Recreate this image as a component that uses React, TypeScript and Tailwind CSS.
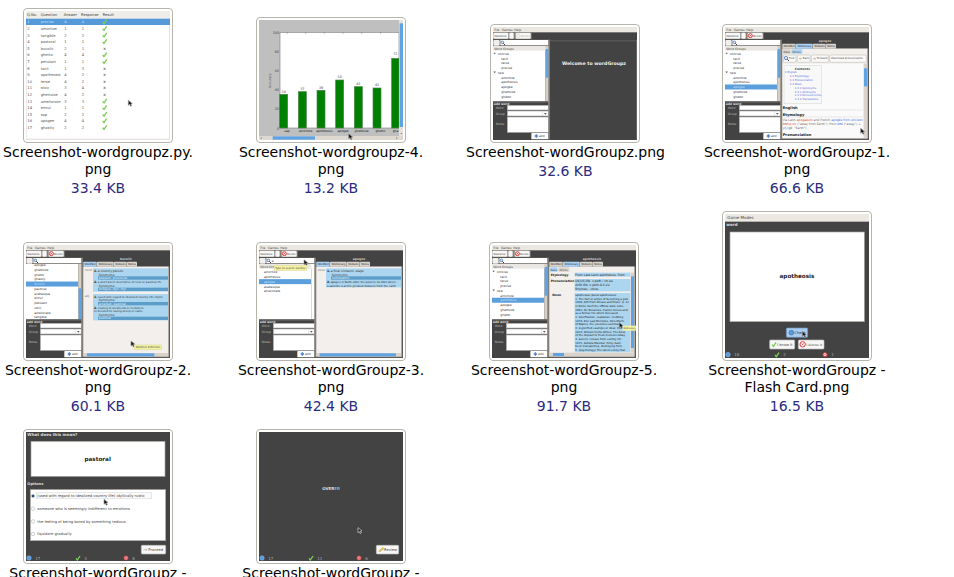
import type { ReactNode } from "react";

const DARK = "#434343";
const BEIGE = "#ebe7e1";
const SELECT = "#5a9fdc";

type LabelProps = { x: number; y: number; size?: number; fill?: string; bold?: boolean; middle?: boolean; children: ReactNode };

function Label({ x, y, size = 9, fill = "#444", bold, middle, children }: LabelProps) {
  return (
    <text x={x} y={y} fontSize={size} fill={fill} fontWeight={bold ? 700 : 400} textAnchor={middle ? "middle" : "start"}>
      {children}
    </text>
  );
}

function Box({ x, y, w, h, fill = "#fff", stroke, r = 0 }: { x: number; y: number; w: number; h: number; fill?: string; stroke?: string; r?: number }) {
  return <rect x={x} y={y} width={w} height={h} fill={fill} stroke={stroke} strokeWidth={stroke ? 2 : 0} rx={r} />;
}

/* Thumbnails are drawn at three units to the pixel. */
function Canvas({ height, title, children }: { height: number; title: string; children: ReactNode }) {
  return (
    <svg viewBox={`0 0 432 ${height}`} className="block w-36" role="img" aria-label={title} fontFamily='"DejaVu Sans", sans-serif'>
      {children}
    </svg>
  );
}

function Tick({ x, y }: { x: number; y: number }) {
  return <path d={`M${x} ${y + 7}l4 5 8-12`} fill="none" stroke="#7ccf54" strokeWidth="4" />;
}

function Pointer({ x, y, light }: { x: number; y: number; light?: boolean }) {
  return <path d={`M${x} ${y}v15l4-3 3 6 3-2-3-5 5-1z`} fill={light ? "#222" : "#111"} stroke={light ? "#ddd" : "#999"} strokeWidth="2" />;
}

function Forbid({ x, y, r = 7 }: { x: number; y: number; r?: number }) {
  return (
    <g>
      <circle cx={x} cy={y} r={r - 1} fill="#fff" stroke="#d8393b" strokeWidth="3" />
      <path d={`M${x - 3} ${y - 3}l6 6m0-6l-6 6`} stroke="#d8393b" strokeWidth="2" />
    </g>
  );
}

function Status({ y, total, right, wrong }: { y: number; total: string; right: string; wrong: string }) {
  return (
    <g>
      <circle cx={9} cy={y} r={7} fill="#5b9ce0" stroke="#a9cdf3" strokeWidth="1" />
      <Label x={28} y={y + 5} size={12} fill="#aaa">{total}</Label>
      <Tick x={150} y={y - 6} />
      <Label x={175} y={y + 5} size={12} fill="#aaa">{right}</Label>
      <Forbid x={300} y={y} />
      <Label x={319} y={y + 5} size={12} fill="#aaa">{wrong}</Label>
    </g>
  );
}

const answers: [string, string, string, boolean][] = [
  ["precise", "4", "4", true],
  ["amortize", "1", "1", true],
  ["tangible", "2", "2", true],
  ["pastoral", "1", "1", true],
  ["bucolic", "2", "1", false],
  ["ghetto", "4", "4", true],
  ["petulant", "1", "1", true],
  ["tacit", "1", "3", false],
  ["apotheosis", "4", "2", false],
  ["terse", "4", "2", false],
  ["stoic", "3", "4", false],
  ["ghettoize", "4", "2", false],
  ["ameliorate", "3", "3", true],
  ["ennui", "1", "1", true],
  ["sap", "2", "2", true],
  ["apogee", "4", "4", true],
  ["ghastly", "2", "2", true],
];

function ResultsThumb() {
  return (
    <Canvas height={387} title="Results table">
      <Box x={0} y={0} w={432} h={387} fill="#e6e3de" />
      <Box x={2} y={22} w={427} h={361} />
      <Box x={0} y={0} w={432} h={22} fill="#efedea" />
      <Label x={3} y={16} size={11}>Q.No.</Label>
      <Label x={44} y={16} size={11}>Question</Label>
      <Label x={113} y={16} size={11}>Answer</Label>
      <Label x={165} y={16} size={11}>Response</Label>
      <Label x={230} y={16} size={11}>Result</Label>
      <Box x={0} y={23} w={432} h={19} fill="#5599d8" />
      {answers.map(([word, answer, response, ok], i) => {
        const y = 37 + i * 19.8;
        const fill = i === 0 ? "#bddcf7" : "#555";
        return (
          <g key={word}>
            <Label x={4} y={y} size={11} fill={fill}>{i + 1}</Label>
            <Label x={44} y={y} size={11} fill={fill}>{word}</Label>
            <Label x={115} y={y} size={11} fill={fill}>{answer}</Label>
            <Label x={167} y={y} size={11} fill={fill}>{response}</Label>
            {ok ? <Tick x={230} y={y - 11} /> : <Label x={232} y={y} size={12} fill="#777" bold>x</Label>}
          </g>
        );
      })}
      <Pointer x={307} y={268} />
    </Canvas>
  );
}

const bars: [string, number, number, number][] = [
  ["sap", 34, 62, 223],
  ["amortize", 37, 118, 215],
  ["apotheosis", 39, 174, 211],
  ["apogee", 50, 230, 180],
  ["ghettoize", 43, 286, 200],
  ["ghetto", 41, 342, 204],
];

function ChartThumb() {
  return (
    <Canvas height={360} title="Accuracy chart">
      <Box x={0} y={0} w={432} h={360} fill="#bfbfbf" />
      <Box x={63} y={37} w={357} h={287} stroke="#888" />
      {[100, 80, 60, 40, 20, 0].map((n, i) => (
        <text key={n} x={60} y={41 + i * 57.5} fontSize={10} fill="#444" textAnchor="end">{n}</text>
      ))}
      <text transform="rotate(-90 36 182)" x={36} y={182} fontSize={10} fill="#555" textAnchor="middle">Accuracy</text>
      {bars.map(([word, value, x, y]) => (
        <g key={word}>
          <Box x={x} y={y} w={24} h={324 - y} fill="#008000" stroke="#4d844d" />
          <Label x={x + 12} y={y - 5} size={10} middle>{value}</Label>
          <Label x={x + 22} y={335} fill="#111" middle>{word}</Label>
        </g>
      ))}
      <Box x={398} y={115} w={22} h={209} fill="#008000" stroke="#4d844d" />
      <Label x={409} y={105} size={10} middle>72</Label>
      <Label x={401} y={335} fill="#111">gha</Label>
      <path d="M85 37v4M140 37v4M196 37v4M252 37v4M308 37v4M365 37v4" stroke="#777" strokeWidth="2" />
      <Box x={420} y={0} w={12} h={348} fill="#e6e1da" />
      <Box x={422} y={10} w={10} h={311} fill="#5fa3e3" />
      <Box x={0} y={348} w={432} h={12} fill="#ded8d0" />
      <Box x={41} y={349} w={127} h={10} fill="#5fa3e3" />
      <path d="M8 351l-4 3 4 3zM412 351l4 3-4 3zM424 339l3 4 3-4z" fill="#777" />
      <Pointer x={269} y={341} />
    </Canvas>
  );
}

const groupTree: [string, number][] = [
  ["concise", 14], ["tacit", 25], ["terse", 25], ["precise", 25], ["new", 14],
  ["amortize", 25], ["apotheosis", 25], ["apogee", 25], ["ghettoize", 25], ["ghetto", 25],
];

type WindowProps = {
  title: string;
  rows: [string, number][];
  firstRow: number;
  selected?: number;
  header?: boolean;
  canDelete?: boolean;
  query?: string;
  track?: [number, number];
  children: ReactNode;
};

function AppWindow({ title, rows, firstRow, selected, header = true, canDelete = true, query, track, children }: WindowProps) {
  return (
    <Canvas height={339} title={title}>
      <Box x={0} y={0} w={432} h={339} fill={DARK} />
      <Box x={0} y={36} w={168} h={303} fill="#55534f" />
      <Box x={0} y={57} w={157} h={167} />
      {rows.map(([word, x], i) => {
        const y = firstRow + i * 14.2;
        return (
          <g key={word}>
            {i === selected && <Box x={0} y={y - 11} w={157} h={15} fill={SELECT} />}
            {x === 14 && <path d={`M1 ${y - 7}h8l-4 5z`} fill="#666" />}
            <Label x={x} y={y} fill={i === selected ? "#c5e0f8" : "#333"}>{word}</Label>
          </g>
        );
      })}
      {header && <Box x={0} y={57} w={166} h={14} fill="#ebe8e3" />}
      {header && <Label x={4} y={68}>Word Groups</Label>}
      <Box x={157} y={57} w={10} h={167} fill={track ? "#d4cec5" : "#fff"} />
      {track && <Box x={158} y={track[0]} w={9} h={track[1]} fill="#5fa3e3" />}
      <Box x={0} y={0} w={432} h={16} fill={BEIGE} />
      <Label x={4} y={12}>File</Label>
      <Label x={27} y={12}>Games</Label>
      <Label x={64} y={12}>Help</Label>
      <Box x={0} y={16} w={116} h={20} fill="#85817b" />
      <Box x={1} y={17} w={45} h={18} fill="#f8f7f5" r={3} />
      <Label x={4} y={29} size={8}>Statistics</Label>
      <Box x={49} y={17} w={13} h={18} fill="#f8f7f5" r={3} />
      <Label x={53} y={29} size={8} fill="#bbb">-</Label>
      <Box x={68} y={17} w={45} h={18} fill="#f8f7f5" r={3} />
      {canDelete ? <Forbid x={76} y={26} /> : <circle cx={76} cy={26} r={5} fill="none" stroke="#ccc" strokeWidth="2" />}
      <Label x={84} y={29} size={8} fill={canDelete ? "#444" : "#aaa"}>Delete</Label>
      <Box x={1} y={39} w={19} h={17} fill="#f2f0ed" r={3} />
      <Box x={22} y={39} w={144} h={16} />
      <circle cx={28} cy={46} r={4} fill="#dfeaf8" stroke="#3565ac" strokeWidth="2" />
      <path d="M31 49l5 5" stroke="#334" strokeWidth="3" />
      {query && <Label x={38} y={50}>{query}</Label>}
      <Box x={0} y={223} w={168} h={116} fill={DARK} />
      <Box x={0} y={224} w={168} h={2} fill="#85817b" />
      <Label x={2} y={233} fill="#ddd" bold>add word</Label>
      <Label x={8} y={245} fill="#bbb">Word</Label>
      <Label x={8} y={263} fill="#bbb">Group</Label>
      <Label x={8} y={295} fill="#bbb">Notes</Label>
      <Box x={43} y={235} w={123} h={14} stroke="#aaa" />
      <Box x={43} y={252} w={123} h={15} stroke="#aaa" />
      <path d="M149 252v15" stroke="#bbb" />
      <path d="M153 258h8l-4 5z" fill="#555" />
      <Box x={43} y={270} w={123} h={46} stroke="#aaa" />
      <Box x={115} y={318} w={51} h={19} fill="#fff" r={2} />
      <path d="M125 327h10M130 322v10" stroke="#4d83cb" strokeWidth="4" />
      <Label x={138} y={331}>add</Label>
      <Box x={166} y={38} w={4} h={299} fill="#969289" />
      {children}
    </Canvas>
  );
}

const tabs: [string, number, number][] = [["WordNet", 172, 41], ["Wiktionary", 213, 51], ["Website", 264, 39], ["Notes", 303, 31]];

function Notebook({ title, active }: { title: string; active: number }) {
  return (
    <g>
      <Label x={300} y={46} fill="#ccc" bold middle>{title}</Label>
      <Box x={170} y={64} w={260} h={273} fill="#8f8b84" />
      <Box x={172} y={65} w={255} h={269} fill="#f2efec" />
      {tabs.map(([name, x, w], i) => (
        <g key={name}>
          <Box x={x} y={50} w={w - 1} h={15} fill={i === active ? "#acd3f5" : "#d9d4cc"} r={2} />
          <Label x={x + w / 2} y={61} size={8} fill="#222" middle>{name}</Label>
        </g>
      ))}
    </g>
  );
}

function SubTabs({ active }: { active: number }) {
  return (
    <g>
      <Box x={173} y={67} w={24} h={13} fill={active === 0 ? "#acd3f5" : "#d9d4cc"} r={2} />
      <Label x={185} y={77} size={8} middle>Data</Label>
      <Box x={199} y={67} w={33} h={13} fill={active === 1 ? "#acd3f5" : "#d9d4cc"} r={2} />
      <Label x={215} y={77} size={8} middle>Online</Label>
    </g>
  );
}

function WelcomeThumb() {
  return (
    <AppWindow title="Welcome window" rows={groupTree} firstRow={84} canDelete={false} track={[66, 86]}>
      <Box x={170} y={40} w={262} h={3} fill="#5f5f5c" />
      <Box x={429} y={40} w={2} h={297} fill="#777" />
      <Label x={303} y={114} size={14} fill="#eee" bold middle>Welcome to wordGroupz</Label>
    </AppWindow>
  );
}

const contents: [string, number][] = [
  ["1 English", 179], ["1.1 Etymology", 194], ["1.2 Pronunciation", 194], ["1.3 Noun", 194],
  ["1.3.1 Synonyms", 209], ["1.3.2 Antonyms", 209], ["1.3.3 Derived terms", 209], ["1.3.4 Translations", 209],
];

const webButtons: [string, number, number][] = [["Find", 175, 38], ["Back", 217, 38], ["Forward", 259, 52], ["download pronunciation", 314, 110]];

function WiktionaryThumb() {
  return (
    <AppWindow title="Wiktionary page" rows={groupTree} firstRow={84} selected={7} track={[66, 86]}>
      <Notebook title="apogee" active={1} />
      <SubTabs active={1} />
      {webButtons.map(([name, x, w], i) => (
        <g key={name}>
          <Box x={x} y={84} w={w} h={22} fill="#faf9f8" stroke="#c6c2bb" r={3} />
          <Label x={i === 3 ? x + 4 : x + 16} y={97} size={8}>{name}</Label>
        </g>
      ))}
      <circle cx={183} cy={93} r={5} fill="#dfeaf8" stroke="#3565ac" strokeWidth="2" />
      <path d="M187 97l5 5" stroke="#334" strokeWidth="3" />
      <path d="M231 95h-8m3-3-3 3 3 3M264 95h8m-3-3 3 3-3 3" fill="none" stroke="#aaa" strokeWidth="2" />
      <Box x={173} y={110} w={243} h={222} fill="#fafafa" />
      <Box x={177} y={116} w={113} h={113} fill="#f8f8f8" stroke="#ddd" />
      <Label x={232} y={128} bold middle>Contents</Label>
      {contents.map(([name, x], i) => (
        <Label key={name} x={x} y={139 + i * 11.5} size={8} fill="#4b67d6">{name}</Label>
      ))}
      <Label x={173} y={246} size={11} fill="#222" bold>English</Label>
      <Label x={173} y={266} size={11} fill="#222" bold>Etymology</Label>
      <path d="M173 249h240M173 270h240" stroke="#ccc" />
      <text x={173} y={282} fontSize={9} fill="#666">
        Via Latin <tspan fill="#d44333">apogaeum</tspan> and French <tspan fill="#4969dc">apogée from Ancient</tspan>
      </text>
      <text x={173} y={294} fontSize={9} fill="#666">
        <tspan fill="#d44333">ἀπόγειον</tspan> (“away from Earth”), from <tspan fill="#4969dc">ἀπό</tspan> (“away”) +
      </text>
      <text x={173} y={306} fontSize={9} fill="#666"><tspan fill="#4969dc">γῆ</tspan> (gê, “Earth”).</text>
      <Label x={173} y={326} size={11} fill="#222" bold>Pronunciation</Label>
      <Box x={416} y={110} w={11} h={222} fill="#d8d2ca" />
      <Box x={417} y={124} w={10} h={54} fill="#5fa3e3" />
      <Pointer x={407} y={304} />
    </AppWindow>
  );
}

const bucolicRows: [string, number][] = [
  ["ghettoize", 25], ["ghetto", 25], ["ghastly", 25], ["bucolic", 25], ["pastoral", 25],
  ["arabesque", 25], ["ennui", 25], ["petulant", 25], ["stoic", 25], ["ameliorate", 25], ["tangible", 25],
];

function Synonyms({ y, words }: { y: number; words: string }) {
  return (
    <g>
      <Label x={218} y={y} fill="#333">Synonyms:</Label>
      <Box x={216} y={y + 2} w={210} h={10} fill="#5c9dc9" />
      <Label x={218} y={y + 10} fill="#e8f4fb">{words}</Label>
    </g>
  );
}

function BucolicThumb() {
  return (
    <AppWindow title="WordNet definition of bucolic" rows={bucolicRows} firstRow={78} selected={3} header={false} track={[130, 92]}>
      <Label x={25} y={64} fill="#333">apogee</Label>
      <Notebook title="bucolic" active={0} />
      <Label x={176} y={79} fill="#777">noun</Label>
      <Label x={176} y={155} fill="#777">adj</Label>
      <Box x={201} y={70} w={225} h={70} fill="#acd5ef" />
      <Box x={201} y={147} w={225} h={79} fill="#acd5ef" />
      <Label x={204} y={81} fill="#222" bold>1.</Label>
      <Label x={215} y={81} fill="#333">a country person</Label>
      <Synonyms y={92} words="peasant, provincial" />
      <Label x={204} y={115} fill="#222" bold>2.</Label>
      <Label x={215} y={115} size={8} fill="#333">a short poem descriptive of rural or pastoral life</Label>
      <Synonyms y={126} words="eclogue, idyll, idyl" />
      <Label x={204} y={158} fill="#222" bold>1.</Label>
      <Label x={215} y={158} size={8} fill="#333">(used with regard to idealized country life) idyllic</Label>
      <Synonyms y={169} words="arcadian, pastoral" />
      <Label x={204} y={191} fill="#222" bold>2.</Label>
      <Label x={215} y={191} size={8} fill="#333">relating to shepherds or herdsmen</Label>
      <Label x={204} y={202} size={8} fill="#333">or devoted to raising sheep or cattle</Label>
      <Synonyms y={213} words="pastoral" />
      <Box x={174} y={324} w={252} h={10} fill="#d8d2ca" />
      <Box x={183} y={325} w={202} h={9} fill="#5fa3e3" />
      <Pointer x={315} y={288} />
      <Box x={325} y={300} w={82} h={14} fill="#f4f2a1" stroke="#e2dfa0" />
      <Label x={366} y={310} size={8} middle>Wordnet definition</Label>
    </AppWindow>
  );
}

const searchRows: [string, number][] = [["amortize", 15], ["apotheosis", 15], ["apogee", 15], ["arabesque", 15], ["ameliorate", 15]];

function SearchThumb() {
  return (
    <AppWindow title="Word search" rows={searchRows} firstRow={85} selected={2} query="a">
      <Notebook title="apogee" active={0} />
      <Label x={176} y={79} fill="#777">noun</Label>
      <Box x={201} y={70} w={225} h={57} fill="#acd5ef" />
      <Label x={204} y={81} fill="#222" bold>1.</Label>
      <Label x={215} y={81} fill="#333">a final climactic stage</Label>
      <Synonyms y={92} words="culmination" />
      <Label x={204} y={115} fill="#222" bold>2.</Label>
      <Label x={215} y={115} size={8} fill="#222">apogee in Earth orbit; the point in its orbit where</Label>
      <Label x={204} y={125} size={8} fill="#222">a satellite is at the greatest distance from the earth</Label>
      <Box x={174} y={324} w={252} h={10} fill="#d8d2ca" />
      <Box x={182} y={325} w={229} h={9} fill="#5fa3e3" />
      <Pointer x={135} y={44} />
      <Box x={46} y={61} w={97} h={15} fill="#f4f2a1" stroke="#e2dfa0" />
      <Label x={94} y={72} size={8} middle>Type to search word(s)</Label>
    </AppWindow>
  );
}

const dense = [
  "apotheosis (plural apotheoses)", "1. The fact or action of becoming a god", "1998, Gift From Rituals and Power, p. 12", "in Rome itself the official state cults",
  "2002, On Nevarrais, Clarion Verses and", "as a formal rite which deceased", "2. Glorification, exaltation; crediting", "1974, Ron Last Mentions, Streetfarm",
  "of Naples, the executive summary", "3. A glorified example or ideal; the", "1923, William Curtis Writes, The book", "of the deposit to fresh meteors today",
  "4. Ascent; release from earthly life", "1972, Astrata Marshal, Perky Sack", "been transporting, destroying from", "5. (psychology) The latent entity that",
];

function ApotheosisThumb() {
  return (
    <AppWindow title="Apotheosis entry" rows={groupTree} firstRow={84} selected={6} track={[66, 86]}>
      <Notebook title="apotheosis" active={1} />
      <SubTabs active={0} />
      <Label x={176} y={93} fill="#222" bold>Etymology</Label>
      <Label x={176} y={112} fill="#222" bold>Pronunciation</Label>
      <Label x={181} y={152} fill="#222" bold>Noun</Label>
      <Box x={248} y={83} w={167} h={12} fill="#acd5ef" />
      <Box x={248} y={102} w={167} h={37} fill="#acd5ef" />
      <Box x={248} y={144} w={167} h={178} fill="#acd5ef" />
      <Label x={250} y={92} fill="#222">From Late Latin apotheosis, from</Label>
      <Label x={250} y={112} fill="#222">UK/US IPA: ə.pɒθ.i.ˈəʊ.sɪs</Label>
      <Label x={250} y={123} fill="#222">AHD IPA: ə.pɒth.ē.ō.sĭs</Label>
      <Label x={250} y={134} fill="#222">Rhymes: -əʊsɪs</Label>
      {dense.map((line, i) => (
        <Label key={line} x={250} y={153 + i * 11} size={8} fill="#111">{line}</Label>
      ))}
      <Box x={416} y={83} w={10} h={239} fill="#d8d2ca" />
      <Box x={417} y={94} w={9} h={215} fill="#5fa3e3" />
      <Box x={173} y={323} w={253} h={11} fill="#d8d2ca" />
      <Box x={183} y={324} w={33} h={9} fill="#5fa3e3" />
      <Pointer x={382} y={233} />
      <Box x={392} y={242} w={40} h={15} fill="#f4f2a1" />
      <Label x={394} y={252} size={7}>Wiktionary</Label>
    </AppWindow>
  );
}

function FlashCardThumb() {
  return (
    <Canvas height={432} title="Flash card">
      <Box x={0} y={0} w={432} h={432} fill={DARK} />
      <Box x={0} y={0} w={432} h={23} fill="#ece8e2" />
      <Label x={7} y={15} size={12}>Game Modes</Label>
      <Label x={4} y={37} size={12} fill="#ddd" bold>word</Label>
      <Box x={15} y={54} w={403} h={269} stroke="#aaa6a0" />
      <Label x={216} y={193} size={17} fill="#222" bold middle>apotheosis</Label>
      <Box x={184} y={342} w={64} h={28} fill="#a9cdee" stroke="#6d94bc" r={3} />
      <circle cx={199} cy={356} r={7} fill="#5b9ce0" stroke="#386ca8" strokeWidth="2" />
      <Label x={208} y={360} size={11} fill="#234">Check</Label>
      <Pointer x={232} y={352} />
      <Box x={134} y={378} w={75} h={27} fill="#f8f7f6" stroke="#bbb" r={3} />
      <Tick x={141} y={385} />
      <Label x={156} y={396} size={11}>I know it</Label>
      <Box x={220} y={378} w={77} h={27} fill="#f8f7f6" stroke="#bbb" r={3} />
      <Forbid x={233} y={391} r={9} />
      <Label x={244} y={396} size={10}>I dunno it</Label>
      <Status y={422} total="18" right="2" wrong="1" />
    </Canvas>
  );
}

const options = [
  "(used with regard to idealized country life) idyllically rustic",
  "someone who is seemingly indifferent to emotions",
  "the feeling of being bored by something tedious",
  "liquidate gradually",
];

function QuizThumb() {
  return (
    <Canvas height={387} title="Multiple choice question">
      <Box x={0} y={0} w={432} h={387} fill={DARK} />
      <Label x={4} y={12} size={12} fill="#ddd" bold>What does this mean?</Label>
      <Box x={15} y={28} w={402} h={105} stroke="#aaa6a0" />
      <Label x={215} y={86} size={17} fill="#222" bold middle>pastoral</Label>
      <Label x={4} y={159} size={11} fill="#ddd" bold>Options</Label>
      <Box x={13} y={173} w={406} h={153} stroke="#aaa6a0" />
      <Box x={31} y={182} w={346} h={18} fill="#fafafa" stroke="#ddd" />
      {options.map((option, i) => (
        <g key={option}>
          <circle cx={21} cy={192 + i * 38} r={5} fill="#fff" stroke="#bbb" strokeWidth="2" />
          <Label x={34} y={196 + i * 38} size={11}>{option}</Label>
        </g>
      ))}
      <circle cx={21} cy={192} r={4} fill="#234f83" />
      <Pointer x={234} y={202} />
      <Box x={346} y={340} w={73} h={26} fill="#f8f7f6" stroke="#bbb" r={3} />
      <path d="M352 353h11m-4-4 4 4-4 4" fill="none" stroke="#aaa" strokeWidth="2" />
      <Label x={367} y={357} size={11}>Proceed</Label>
      <Status y={378} total="17" right="3" wrong="8" />
    </Canvas>
  );
}

function OverThumb() {
  return (
    <Canvas height={387} title="Game over">
      <Box x={0} y={0} w={432} h={387} fill={DARK} />
      <Label x={216} y={174} size={12} fill="#ddd" bold middle>OVER!!!</Label>
      <Pointer x={297} y={287} light />
      <Box x={352} y={340} w={67} h={26} fill="#f8f7f6" stroke="#bbb" r={3} />
      <path d="M359 358l12-12 4 4-12 9z" fill="#e5c64c" stroke="#a69451" />
      <Label x={375} y={357} size={11}>Review</Label>
      <Status y={378} total="17" right="11" wrong="6" />
    </Canvas>
  );
}

type FileItem = { lines: string[]; size?: string; thumb: ReactNode };

const files: FileItem[] = [
  { lines: ["Screenshot-wordgroupz.py.", "png"], size: "33.4 KB", thumb: <ResultsThumb /> },
  { lines: ["Screenshot-wordgroupz-4.", "png"], size: "13.2 KB", thumb: <ChartThumb /> },
  { lines: ["Screenshot-wordGroupz.png"], size: "32.6 KB", thumb: <WelcomeThumb /> },
  { lines: ["Screenshot-wordGroupz-1.", "png"], size: "66.6 KB", thumb: <WiktionaryThumb /> },
  { lines: ["Screenshot-wordGroupz-2.", "png"], size: "60.1 KB", thumb: <BucolicThumb /> },
  { lines: ["Screenshot-wordGroupz-3.", "png"], size: "42.4 KB", thumb: <SearchThumb /> },
  { lines: ["Screenshot-wordGroupz-5.", "png"], size: "91.7 KB", thumb: <ApotheosisThumb /> },
  { lines: ["Screenshot-wordGroupz -", "Flash Card.png"], size: "16.5 KB", thumb: <FlashCardThumb /> },
  { lines: ["Screenshot-wordGroupz -"], thumb: <QuizThumb /> },
  { lines: ["Screenshot-wordGroupz -"], thumb: <OverThumb /> },
];

function FileTile({ file }: { file: FileItem }) {
  return (
    <figure className="row-span-2 grid grid-rows-subgrid justify-items-center">
      <div className="self-end rounded-[4px] border border-[#b5b5ab] bg-white p-[2px]">{file.thumb}</div>
      <figcaption className="pt-px pb-[14px] text-center text-[14px] leading-[17px] whitespace-nowrap text-black">
        {file.lines.map((line) => (
          <span key={line} className="block">{line}</span>
        ))}
        {file.size && <span className="block pt-[2px] text-[#2b2b80]">{file.size}</span>}
      </figcaption>
    </figure>
  );
}

export default function App() {
  return (
    <main className="h-screen overflow-hidden bg-white pt-2 font-['DejaVu_Sans',sans-serif]">
      <div className="grid grid-cols-[repeat(auto-fill,196px)] gap-x-[37px]">
        {files.map((file, i) => (
          <FileTile key={i} file={file} />
        ))}
      </div>
    </main>
  );
}
